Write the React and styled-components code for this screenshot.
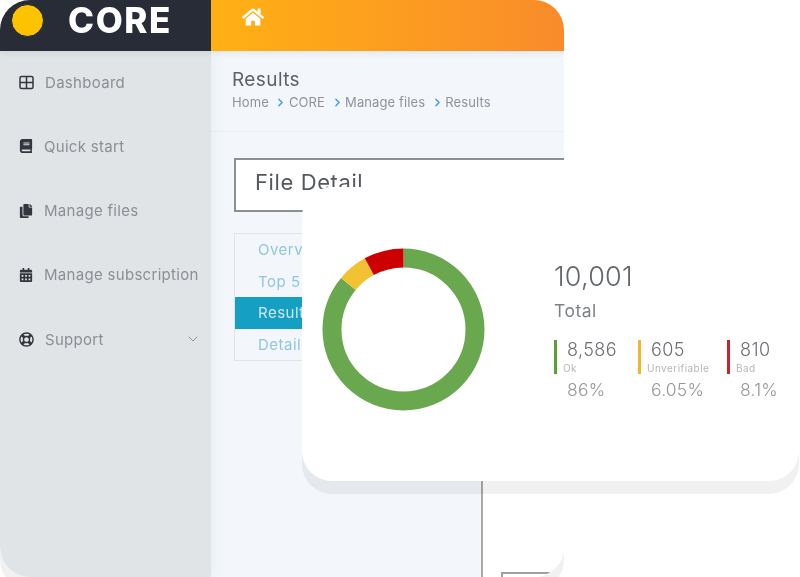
import React from "react";
import styled, { createGlobalStyle } from "styled-components";
import { FaHome, FaBook, FaCopy, FaCalendarAlt, FaRegLifeRing } from "react-icons/fa";
import { ChevronDown, ChevronRight } from "lucide-react";

const Global = createGlobalStyle`
  html, body { margin: 0; padding: 0; background: #fff; overflow: hidden; }
  * { box-sizing: border-box; }
  body { font-family: Inter, "Liberation Sans", sans-serif; }
`;

const Stage = styled.div`
  position: relative;
  width: 800px;
  height: 577px;
  overflow: hidden;
  background: #fff;
  filter: blur(0.35px);
`;

const Win = styled.div`
  width: 564px;
  height: 577px;
  display: flex;
  flex-direction: column;
  border-radius: 30px;
  overflow: hidden;
  background: #fff;
`;

const WinShadow = styled.div`
  width: 564px;
  height: 577px;
  border-radius: 30px;
  box-shadow: 0 13px 0 rgba(0, 0, 0, 0.055);
`;

const Header = styled.header`
  display: flex;
  height: 51px;
  flex: none;
  position: relative;
  z-index: 2;
  box-shadow: 0 2px 6px rgba(0, 0, 0, 0.08);
`;

const Brand = styled.div`
  width: 211px;
  background: #272c36;
  display: flex;
  align-items: flex-start;
  padding: 4px 0 0 11px;
  gap: 24px;
`;

const Dot = styled.span`
  width: 33px;
  height: 33px;
  border-radius: 50%;
  background: #fdc300;
  border: 1px solid #16233f;
  flex: none;
`;

const Logo = styled.span`
  font-size: 35px;
  line-height: 33px;
  font-weight: 800;
  color: #fff;
  letter-spacing: 1.6px;
`;

const TopBar = styled.div`
  flex: 1;
  background: linear-gradient(90deg, #ffb113 0%, #f98b2b 100%);
  color: #fff;
  padding: 6px 0 0 31px;
  font-size: 22px;
  line-height: 22px;
`;

const Below = styled.div`
  flex: 1;
  display: flex;
  min-height: 0;
`;

const Side = styled.nav`
  width: 211px;
  flex: none;
  background: #e0e4e7;
  padding-top: 16px;
  display: flex;
  flex-direction: column;
  gap: 34.3px;
  position: relative;
  z-index: 1;
  box-shadow: 3px 0 14px rgba(60, 70, 90, 0.05);
`;

const SideItem = styled.div`
  height: 30px;
  display: flex;
  align-items: center;
  padding-left: 19px;
  padding-right: 10px;
  gap: ${(p) => p.$gap}px;
  color: #8b8f93;
  font-size: 15px;
  letter-spacing: 0.3px;
  white-space: nowrap;
  svg { flex: none; color: #33373d; }
`;

const Chevron = styled.span`
  margin-left: auto;
  display: flex;
  svg { color: #8e9398; }
`;

const Main = styled.main`
  flex: 1;
  min-width: 0;
  background: #f3f7fb;
  display: flex;
  flex-direction: column;
`;

const PageHead = styled.div`
  height: 81px;
  flex: none;
  padding: 17px 0 0 21px;
  border-bottom: 1px solid #eaeef2;
`;

const PageTitle = styled.h1`
  margin: 0;
  font-size: 19px;
  line-height: 23px;
  font-weight: 400;
  color: #5e6266;
  letter-spacing: 0.4px;
`;

const Crumbs = styled.div`
  display: flex;
  align-items: center;
  margin-top: 3px;
  font-size: 13px;
  line-height: 16px;
  color: #8f9397;
  letter-spacing: 0.12px;
  svg { color: #3f97ee; margin: 0 1.5px 0 5.5px; }
`;

const Body = styled.div`
  flex: 1;
  padding: 26px 0 0 23px;
  display: flex;
  flex-direction: column;
  min-height: 0;
`;

const DetailBox = styled.div`
  height: 54px;
  width: 400px;
  flex: none;
  background: #fff;
  border: 2px solid #8e8f91;
  padding: 8px 0 0 19px;
  font-size: 22px;
  line-height: 28px;
  color: #55595d;
  letter-spacing: 0.6px;
`;

const Lower = styled.div`
  flex: 1;
  display: flex;
  min-height: 0;
`;

const Tabs = styled.div`
  width: 247px;
  flex: none;
  align-self: flex-start;
  margin-top: 21px;
  border: 1px solid #dfe4e8;
  display: flex;
  flex-direction: column;
`;

const Tab = styled.div`
  height: 31.5px;
  padding-left: 23px;
  display: flex;
  align-items: center;
  font-size: 15px;
  letter-spacing: 0.5px;
  color: ${(p) => (p.$active ? "#cdeaf2" : "#8fc7de")};
  background: ${(p) => (p.$active ? "#159fc3" : "transparent")};
`;

const SidePane = styled.div`
  flex: 1;
  background: #fff;
  border-left: 2px solid #a9a9a9;
  padding: 360px 0 0 18px;
`;

const MiniBox = styled.div`
  width: 50px;
  height: 40px;
  border-top: 2px solid #a0a0a0;
  border-left: 2px solid #a0a0a0;
`;

const Card = styled.section`
  position: absolute;
  left: 302px;
  top: 187px;
  width: 497px;
  height: 294px;
  background: #fff;
  border-radius: 30px;
  box-shadow: 0 13px 0 rgba(0, 0, 0, 0.055);
  display: flex;
  padding: 61px 0 0 20px;
  z-index: 3;
`;

const Donut = styled.svg`
  width: 163px;
  height: 163px;
  flex: none;
  transform: rotate(-90deg);
`;

const Summary = styled.div`
  margin-left: 69px;
  margin-top: 13px;
  display: flex;
  flex-direction: column;
`;

const Total = styled.div`
  font-size: 27px;
  line-height: 32px;
  font-weight: 300;
  color: #63676b;
  letter-spacing: 0.2px;
`;

const TotalLabel = styled.div`
  margin-top: 7px;
  font-size: 17.5px;
  line-height: 22px;
  color: #7e8286;
  letter-spacing: 0.5px;
`;

const Stats = styled.div`
  display: flex;
  margin-top: 18px;
`;

const Stat = styled.div`
  width: ${(p) => p.$w}px;
`;

const StatTop = styled.div`
  height: 34px;
  border-left: 3px solid ${(p) => p.$color};
  padding-left: 6px;
`;

const StatValue = styled.div`
  margin-left: 4px;
  font-size: 18px;
  line-height: 20px;
  font-weight: 300;
  color: #6c7074;
  letter-spacing: 0.4px;
`;

const StatLabel = styled.div`
  margin-top: 2px;
  font-size: 10px;
  line-height: 12px;
  color: #b3b6b8;
  letter-spacing: 0.45px;
`;

const StatPct = styled.div`
  margin: 5px 0 0 13px;
  font-size: 17.5px;
  line-height: 22px;
  font-weight: 300;
  color: #95989b;
  letter-spacing: 0.2px;
`;

function GridIcon() {
  return (
    <svg width="15" height="15" viewBox="0 0 15 15" fill="none" stroke="currentColor" strokeWidth="1.5">
      <rect x="1" y="1.5" width="13" height="12" rx="1.5" />
      <path d="M7.5 1.5v12M1 7.5h13" />
    </svg>
  );
}

const menu = [
  { label: "Dashboard", icon: <GridIcon />, gap: 11 },
  { label: "Quick start", icon: <FaBook size={14} />, gap: 11 },
  { label: "Manage files", icon: <FaCopy size={14} />, gap: 11 },
  { label: "Manage subscription", icon: <FaCalendarAlt size={14} />, gap: 11 },
  { label: "Support", icon: <FaRegLifeRing size={15} />, gap: 11, more: true },
];

const crumbs = ["Home", "CORE", "Manage files", "Results"];
const tabs = ["Overview", "Top 5 domains", "Results", "Details"];

const segments = [
  { color: "#6aa84f", pct: 85.85 },
  { color: "#f1c232", pct: 6.05 },
  { color: "#cc0000", pct: 8.1 },
];

const stats = [
  { value: "8,586", label: "Ok", pct: "86%", color: "#5ba032", w: 84 },
  { value: "605", label: "Unverifiable", pct: "6.05%", color: "#f0b92d", w: 89 },
  { value: "810", label: "Bad", pct: "8.1%", color: "#c8232c", w: 70 },
];

function Ring() {
  const r = 71.5;
  const c = 2 * Math.PI * r;
  let offset = 0;
  return (
    <Donut viewBox="0 0 163 163">
      {segments.map((s) => {
        const len = (s.pct / 100) * c;
        const el = (
          <circle
            key={s.color}
            cx="81.5"
            cy="81.5"
            r={r}
            fill="none"
            stroke={s.color}
            strokeWidth="19"
            strokeDasharray={`${len} ${c - len}`}
            strokeDashoffset={-offset}
          />
        );
        offset += len;
        return el;
      })}
    </Donut>
  );
}

export default function App() {
  return (
    <Stage>
      <Global />
      <WinShadow>
        <Win>
          <Header>
            <Brand>
              <Dot />
              <Logo>CORE</Logo>
            </Brand>
            <TopBar>
              <FaHome />
            </TopBar>
          </Header>
          <Below>
            <Side>
              {menu.map((m) => (
                <SideItem key={m.label} $gap={m.gap}>
                  {m.icon}
                  <span>{m.label}</span>
                  {m.more && (
                    <Chevron>
                      <ChevronDown size={16} strokeWidth={1.5} />
                    </Chevron>
                  )}
                </SideItem>
              ))}
            </Side>
            <Main>
              <PageHead>
                <PageTitle>Results</PageTitle>
                <Crumbs>
                  {crumbs.map((c, i) => (
                    <React.Fragment key={c}>
                      {i > 0 && <ChevronRight size={13} strokeWidth={2.5} />}
                      <span>{c}</span>
                    </React.Fragment>
                  ))}
                </Crumbs>
              </PageHead>
              <Body>
                <DetailBox>File Detail</DetailBox>
                <Lower>
                  <Tabs>
                    {tabs.map((t) => (
                      <Tab key={t} $active={t === "Results"}>
                        {t}
                      </Tab>
                    ))}
                  </Tabs>
                  <SidePane>
                    <MiniBox />
                  </SidePane>
                </Lower>
              </Body>
            </Main>
          </Below>
        </Win>
      </WinShadow>
      <Card>
        <Ring />
        <Summary>
          <Total>10,001</Total>
          <TotalLabel>Total</TotalLabel>
          <Stats>
            {stats.map((s) => (
              <Stat key={s.label} $w={s.w}>
                <StatTop $color={s.color}>
                  <StatValue>{s.value}</StatValue>
                  <StatLabel>{s.label}</StatLabel>
                </StatTop>
                <StatPct>{s.pct}</StatPct>
              </Stat>
            ))}
          </Stats>
        </Summary>
      </Card>
    </Stage>
  );
}
